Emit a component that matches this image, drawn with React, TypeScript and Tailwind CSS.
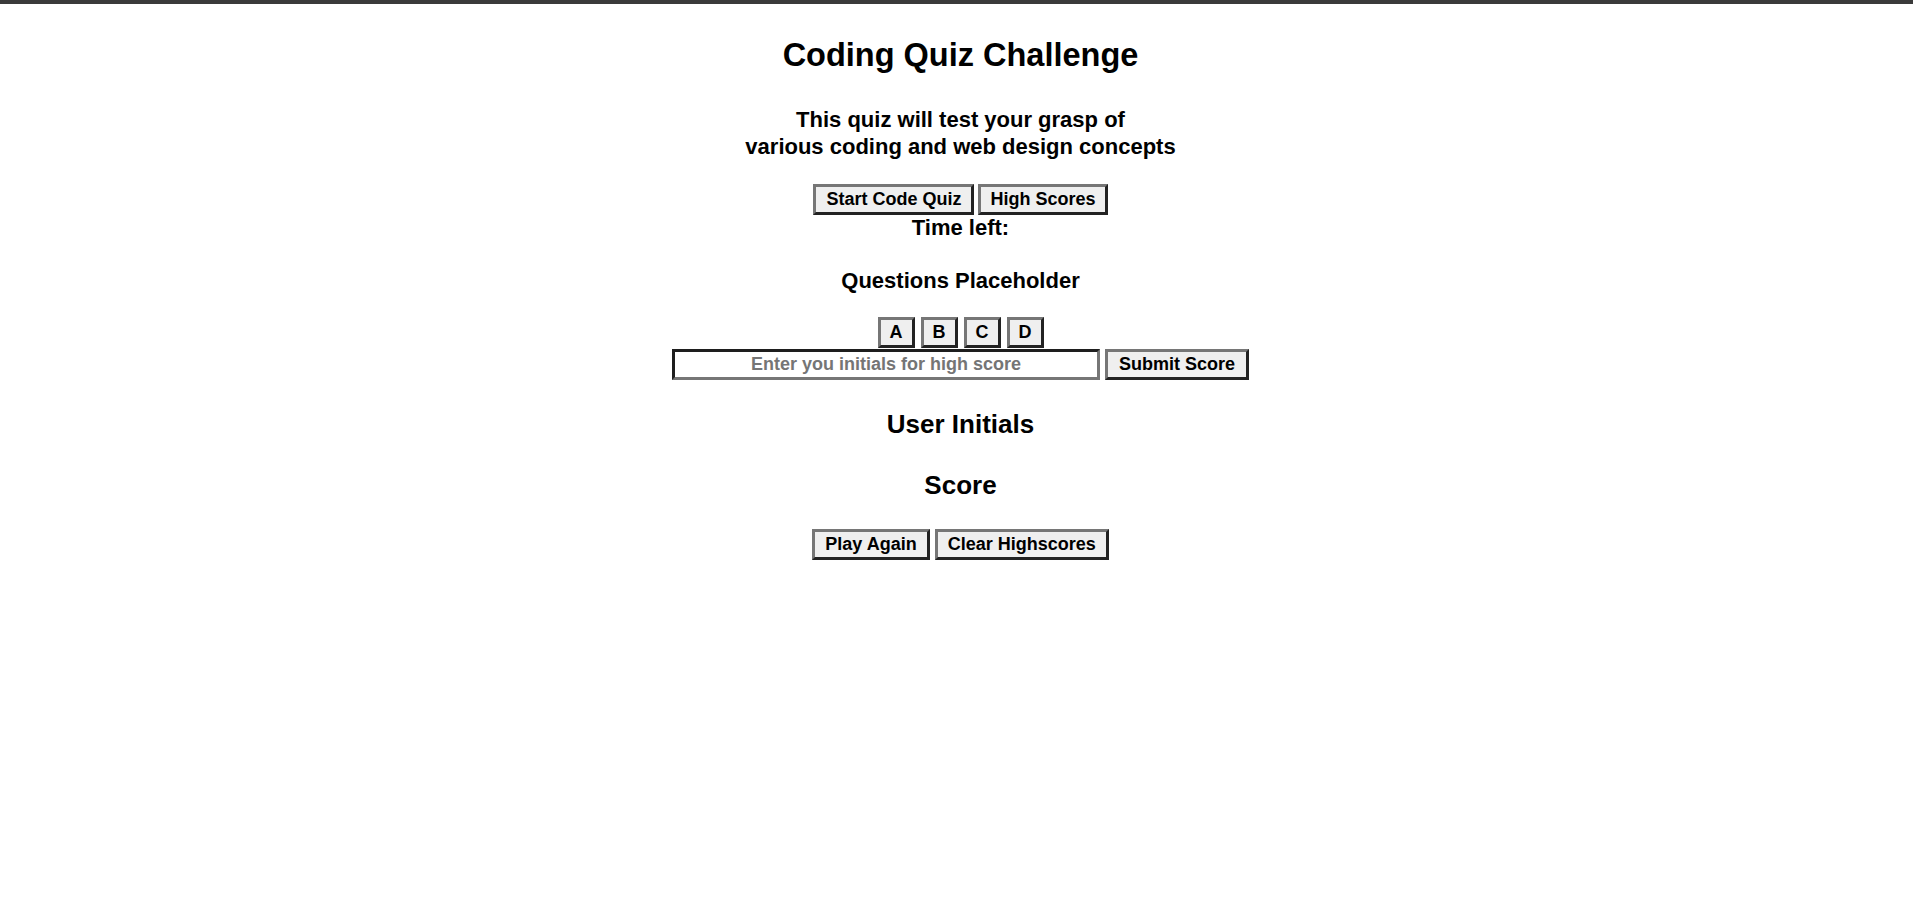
import React from "react";

const font = { fontFamily: '"Liberation Sans", Arial, sans-serif' };

function Btn({ children, className = "" }: { children: React.ReactNode; className?: string }) {
  return (
    <button
      type="button"
      className={
        "h-[31px] bg-[#efefef] border-[3px] border-solid border-t-[#767676] border-l-[#767676] border-r-[#222222] border-b-[#222222] text-black text-[18px] font-bold leading-[21px] " +
        className
      }
    >
      {children}
    </button>
  );
}

export default function App() {
  return (
    <div className="min-h-[916px] bg-white text-black" style={font}>
      <div className="h-[4px] bg-[#3a3a3a]" />
      <div className="pl-[8px] flex flex-col items-center">
        <h1 className="mt-[33px] text-[32.5px] leading-[37px] font-bold">Coding Quiz Challenge</h1>
        <h3 className="mt-[32px] text-[22px] leading-[27px] font-bold text-center">
          This quiz will test your grasp of
          <br />
          various coding and web design concepts
        </h3>
        <div className="mt-[24px] flex gap-[4px]">
          <Btn className="px-[10px]">Start Code Quiz</Btn>
          <Btn className="px-[9px]">High Scores</Btn>
        </div>
        <div className="text-[22px] leading-[26px] font-bold">Time left:</div>
        <h3 className="mt-[27px] text-[22px] leading-[26px] font-bold">Questions Placeholder</h3>
        <div className="mt-[23px] flex gap-[6px]">
          <Btn className="px-[9px]">A</Btn>
          <Btn className="px-[9px]">B</Btn>
          <Btn className="px-[9px]">C</Btn>
          <Btn className="px-[9px]">D</Btn>
        </div>
        <div className="mt-[1px] flex gap-[5px]">
          <input
            type="text"
            placeholder="Enter you initials for high score"
            className="w-[428px] h-[31px] bg-white border-[3px] border-solid border-t-[#1e1e1e] border-l-[#1e1e1e] border-r-[#767676] border-b-[#767676] text-center text-[18px] font-bold placeholder:text-[#757575] outline-none"
            style={font}
          />
          <Btn className="px-[11px]">Submit Score</Btn>
        </div>
        <h2 className="mt-[29px] text-[26px] leading-[30px] font-bold">User Initials</h2>
        <h2 className="mt-[31px] text-[26px] leading-[30px] font-bold">Score</h2>
        <div className="mt-[29px] flex gap-[5px]">
          <Btn className="px-[10px]">Play Again</Btn>
          <Btn className="px-[10px]">Clear Highscores</Btn>
        </div>
      </div>
    </div>
  );
}
